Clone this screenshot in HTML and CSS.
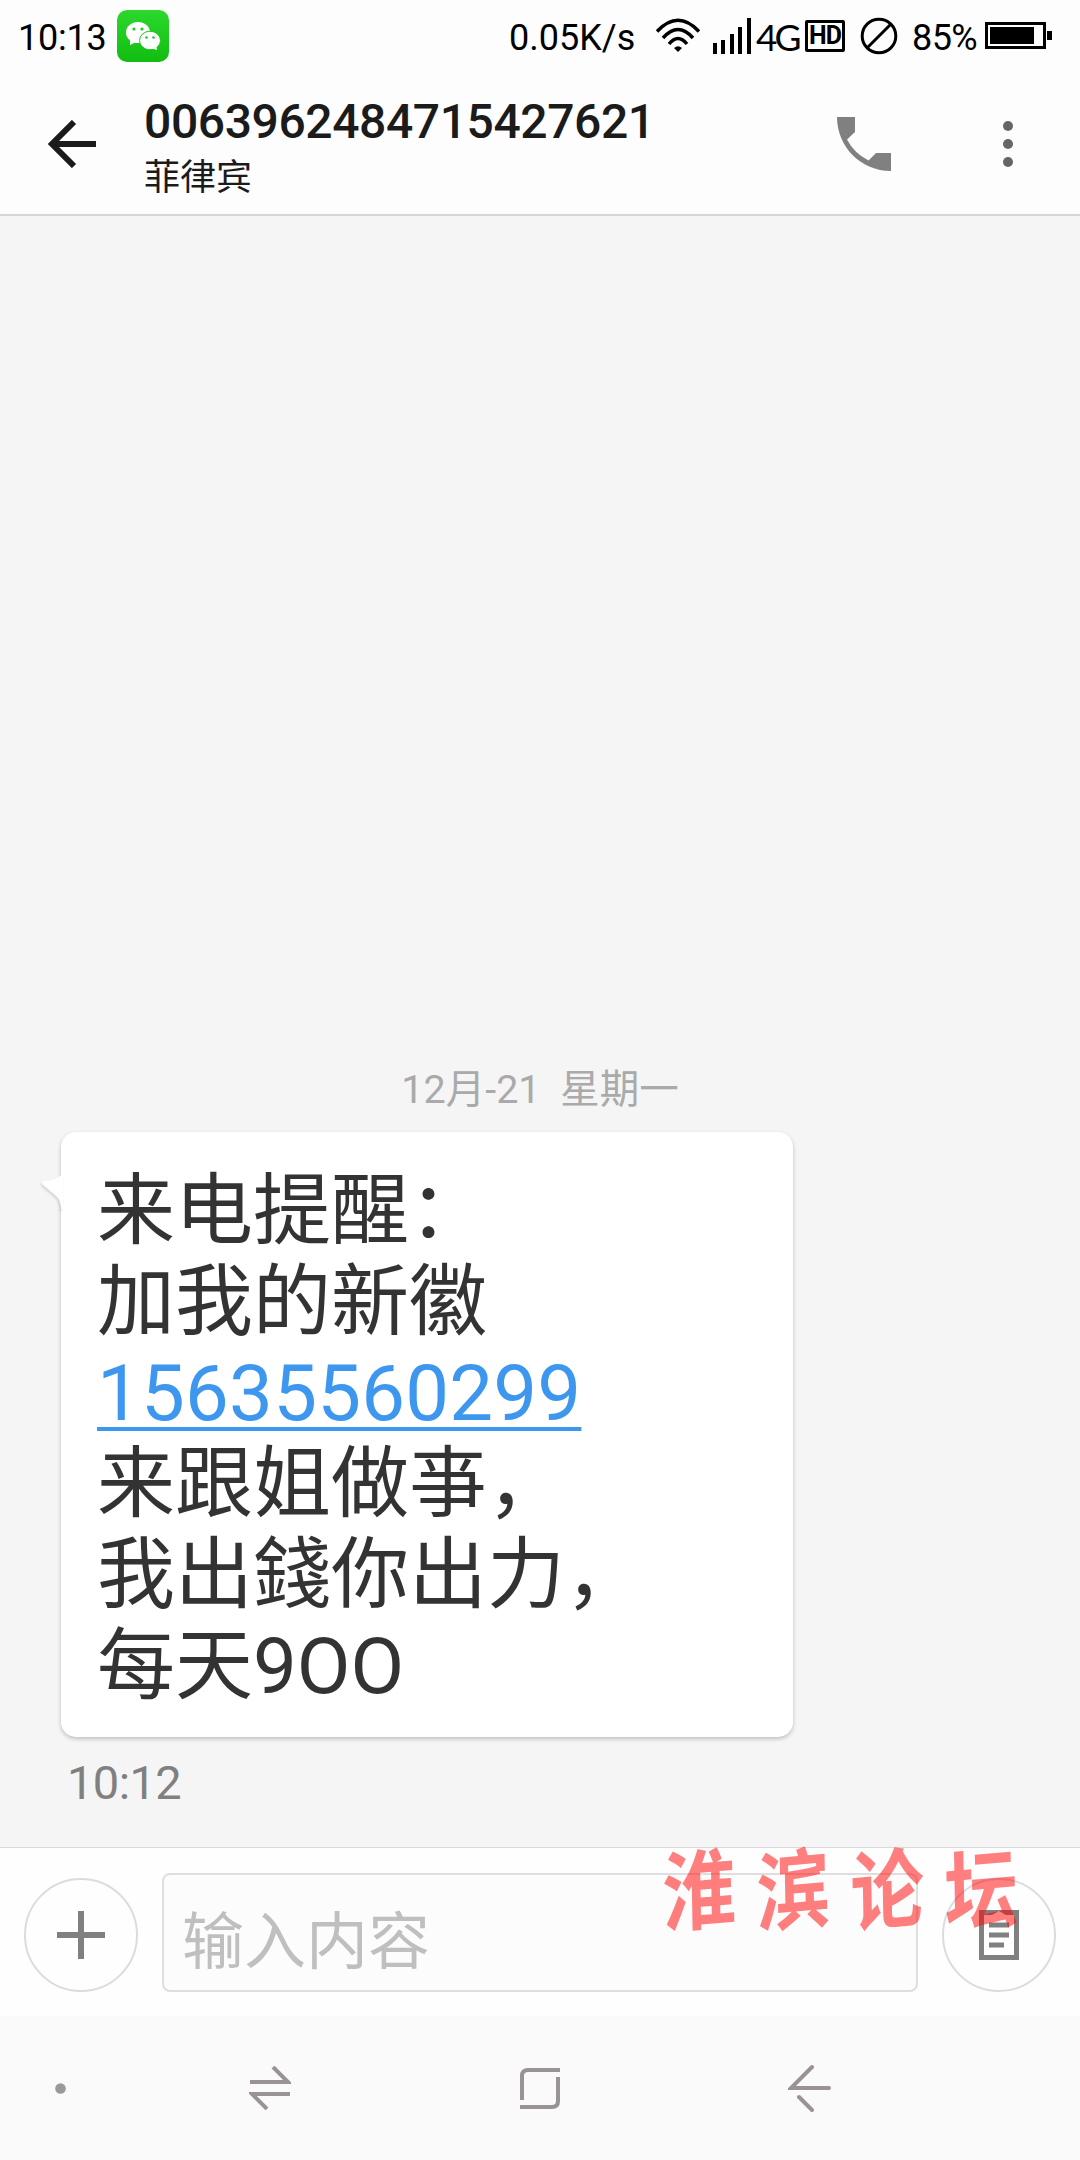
FILE: index.html
```
<!DOCTYPE html>
<html lang="zh-CN">
<head>
  <title>短信</title>
  <meta charset="UTF-8">
  <meta name="viewport" content="width=device-width, initial-scale=1.0">
  <link rel="stylesheet" href="styles.css">
</head>
<body>
  <div class="status">
    <span class="clock">10:13</span>
    <svg class="wechat" width="52" height="52" viewBox="0 0 52 52">
      <defs>
        <linearGradient id="green" x1="0" y1="0" x2="0" y2="1">
          <stop offset="0" stop-color="#2bd82b"/>
          <stop offset="1" stop-color="#10bd10"/>
        </linearGradient>
      </defs>
      <rect width="52" height="52" rx="10" fill="url(#green)"/>
      <path d="M13 30l0 5 6-3z" fill="#fff"/>
      <ellipse cx="21" cy="22.500" rx="12" ry="10.500" fill="#fff"/>
      <ellipse cx="33" cy="30.500" rx="10.500" ry="9.300" fill="#fff" stroke="#1cc91c"/>
      <path d="M34 38l6 2-1-5z" fill="#fff"/>
      <circle cx="17" cy="19" r="1.600" fill="#1cc91c"/><circle cx="25" cy="19" r="1.600" fill="#1cc91c"/>
      <circle cx="29.500" cy="27.500" r="1.300" fill="#1cc91c"/><circle cx="36.500" cy="27.500" r="1.300" fill="#1cc91c"/>
    </svg>
    <span class="speed">0.05K/s</span>
    <svg class="wifi" width="44" height="36" viewBox="0 0 44 36" fill="none" stroke="#000" stroke-width="3.500">
      <path d="M1 13.500Q22-9 43 13.500M7 20Q22 3 37 20M13 26Q22 15 31 26"/>
      <path d="M18 30Q22 26.500 26 30L22 34z" fill="#000" stroke="none"/>
    </svg>
    <svg class="signal" width="40" height="36" viewBox="0 0 40 36">
      <path d="M1 25h4v11H1zM9 22h4v14H9zM18 16h4v20h-4zM26 9h4v27h-4zM35 0h4v36h-4z"/>
    </svg>
    <span class="net">4G</span>
    <span class="hd">HD</span>
    <svg class="mute" width="38" height="38" viewBox="0 0 38 38" fill="none" stroke="#000" stroke-width="3">
      <circle cx="19" cy="19" r="16.800"/><path d="M31 7L7 31"/>
    </svg>
    <span class="percent">85%</span>
    <svg class="battery" width="68" height="28" viewBox="0 0 68 28">
      <rect x="1.500" y="1.500" width="58" height="24" fill="none" stroke="#000" stroke-width="3"/>
      <path d="M5 5h44v17H5zM62 9h5v9h-5z"/>
    </svg>
  </div>

  <div class="header">
    <svg class="back" width="48" height="48" viewBox="0 0 48 48" fill="none" stroke="#1b1b1b" stroke-width="6">
      <path d="M48 24H6M26 2L4 24l22 22"/>
    </svg>
    <div class="contact">
      <div class="number">0063962484715427621</div>
      <div class="place">菲律宾</div>
    </div>
    <svg class="call" width="54" height="54" viewBox="0 0 54 54" fill="#808080">
      <path d="M0 0h18v15l-8 7.500Q17 36 31.500 43.500L39 36h15v18C24 54 0 30 0 0z"/>
    </svg>
    <svg class="more" width="10" height="48" viewBox="0 0 10 48" fill="#666">
      <circle cx="5" cy="6" r="5"/><circle cx="5" cy="24" r="5"/><circle cx="5" cy="42" r="5"/>
    </svg>
  </div>

  <div class="thread">
    <div class="date">12月-21&nbsp; 星期一</div>
    <div class="bubble">
      <svg class="tail" width="22" height="36" viewBox="0 0 22 36"><path d="M22 0Q18 7 2 8Q0 9 2 12L14 22Q20 27 20 36H22z" fill="#fff"/></svg>
      来电提醒：<br>
      加我的新徽<br>
      <a class="link">15635560299</a><br>
      来跟姐做亊，<br>
      我出錢你出力，<br>
      每天9OO
    </div>
    <div class="time">10:12</div>
  </div>

  <div class="compose">
    <div class="round">
      <svg width="48" height="48" viewBox="0 0 48 48" stroke="#808080" stroke-width="6"><path d="M0 24h48M24 0v48"/></svg>
    </div>
    <div class="field">输入内容</div>
    <div class="round">
      <svg width="40" height="50" viewBox="0 0 40 50" fill="#808080">
        <path d="M0 0h40v50H0zM5 5v40h30V5z" fill-rule="evenodd"/>
        <path d="M13 5l7-4 7 4z" fill="#fff"/>
        <path d="M10 12.500h20v5H10zM10 22.500h20v5H10zM10 32.500h15v5H10z"/>
      </svg>
    </div>
    <div class="watermark"><span>淮</span><span>滨</span><span>论</span><span>坛</span></div>
  </div>

  <div class="nav">
    <svg width="11" height="11" viewBox="0 0 11 11"><circle cx="5.500" cy="5.500" r="5.300" fill="#999"/></svg>
    <svg class="swap" width="42" height="44" viewBox="0 0 42 44">
      <path d="M1 16h38L24 1M41 28H3l15 15"/>
    </svg>
    <svg class="home" width="42" height="42" viewBox="0 0 42 42">
      <path d="M3 33V9Q3 3 9 3H41M39 10V34Q39 40 33 40H1"/>
    </svg>
    <svg class="prev" width="44" height="48" viewBox="0 0 44 48">
      <path d="M41 24H3L24 3M11 33L24 46" stroke-linecap="round"/>
    </svg>
  </div>
</body>
</html>
```
FILE: styles.css
```
body {
  margin:0;
  width:1080px;
  height:2160px;
  display:flex;
  flex-direction:column;
  overflow:hidden;
  background:#f5f5f5;
  font-family:Roboto, "Noto Sans CJK SC", sans-serif;
}
svg{
  display:block;
  flex:none;
}
.status{
  display:flex;
  align-items:center;
  height:72px;
  box-sizing:border-box;
  padding-left:18px;
  background:#fdfdfd;
  color:#000;
  font-size:36px;
  white-space:nowrap;
}
.clock{
  width:99px;
  padding-top:3px;
  letter-spacing:-0.2px;
}
.speed{
  width:147px;
  margin-left:340px;
  padding-top:3px;
}
.wifi{
  margin-right:12px;
}
.signal{
  margin-right:4px;
}
.net{
  width:49px;
  font-family:Lato, sans-serif;
  font-size:37px;
  letter-spacing:-3px;
}
.hd{
  width:40px;
  height:32px;
  box-sizing:border-box;
  border:3px solid #000;
  border-radius:2px;
  font:bold 25px/26px Roboto, sans-serif;
  letter-spacing:-1px;
  text-align:center;
}
.mute{
  margin:0 14px 0 15px;
}
.percent{
  width:73px;
  padding-top:3px;
  letter-spacing:-0.6px;
}
.header{
  display:flex;
  align-items:center;
  height:144px;
  box-sizing:border-box;
  padding:2px 0 0 48px;
  background:#fdfdfd;
  border-bottom:2px solid #d6d6d6;
}
.contact{
  width:693px;
  margin-left:48px;
  padding-top:12px;
  color:#1b1b1b;
}
.number{
  font-size:48px;
  font-weight:500;
  letter-spacing:-0.4px;
  line-height:56px;
}
.place{
  font-size:36px;
  line-height:56px;
}
.call{
  margin-right:112px;
}
.thread{
  flex:1;
  display:flex;
  flex-direction:column;
  justify-content:flex-end;
  padding:0 61px 34px;
}
.date{
  text-align:center;
  color:#aaa;
  font-size:39.5px;
  line-height:58px;
  margin-bottom:13px;
}
.bubble{
  position:relative;
  width:732px;
  height:605px;
  box-sizing:border-box;
  padding:34px 36px 0;
  border-radius:15px;
  background:#fff;
  box-shadow:0 2px 4px rgba(0,0,0,0.22);
  color:#333;
  font-size:78px;
  line-height:91px;
  white-space:nowrap;
}
.tail{
  position:absolute;
  left:-20px;
  top:41px;
  filter:drop-shadow(-1px 2px 1px rgba(0,0,0,0.12));
}
.link{
  color:#3e97ee;
  letter-spacing:0.2px;
  text-decoration:underline;
  text-decoration-thickness:4px;
  text-underline-offset:7px;
  text-decoration-skip-ink:none;
}
.time{
  margin:16px 0 0 6px;
  color:#808080;
  font-size:47px;
  letter-spacing:-0.6px;
  line-height:60px;
}
.compose{
  position:relative;
  display:flex;
  align-items:flex-end;
  gap:24px;
  height:169px;
  box-sizing:border-box;
  padding:0 24px 24px;
  border-top:1px solid #d8dadb;
  background:#fefefe;
}
.round{
  display:flex;
  align-items:center;
  justify-content:center;
  width:114px;
  height:114px;
  box-sizing:border-box;
  border:2px solid #dcdcdc;
  border-radius:50%;
}
.field{
  flex:1;
  height:119px;
  box-sizing:border-box;
  padding:8px 0 0 18px;
  border:2px solid #dedede;
  border-radius:8px;
  background:#fcfcfc;
  color:#bfbfbf;
  font-size:62px;
  line-height:119px;
}
.watermark{
  position:absolute;
  left:658px;
  top:-18px;
  display:flex;
  gap:12px;
  color:rgba(255,0,0,0.5);
  font-family:"Noto Sans CJK SC", sans-serif;
  font-size:82px;
  font-weight:700;
  line-height:110px;
}
.watermark span{
  transform:rotate(-5deg) skewX(-4deg) scale(0.9,1.06);
}
.nav{
  display:flex;
  align-items:center;
  height:144px;
  padding-left:55px;
  background:#fafafa;
}
.nav path{
  fill:none;
  stroke:#999393;
  stroke-width:4;
}
.swap{
  margin-left:183px;
}
.home{
  margin-left:228px;
}
.prev{
  margin-left:227px;
}
```
